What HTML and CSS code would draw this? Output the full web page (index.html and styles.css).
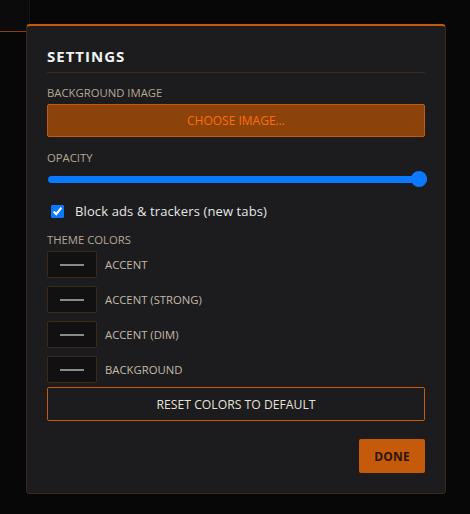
FILE: index.html
```html
<!DOCTYPE html>
<html lang="en">
<head>
<meta charset="utf-8">
<title>Settings</title>
<link rel="stylesheet" href="styles.css">
</head>
<body>
<div class="app">
  <div class="tabbar">
    <div class="tab"></div>
  </div>
</div>

<div class="modal">
  <h2 class="modal-title">SETTINGS</h2>

  <div class="field-label">BACKGROUND IMAGE</div>
  <button class="btn-choose">CHOOSE IMAGE...</button>

  <div class="field-label opacity-label">OPACITY</div>
  <input class="slider" type="range" min="0" max="100" value="100">

  <label class="check-row">
    <input type="checkbox" class="check" checked>
    <span>Block ads &amp; trackers (new tabs)</span>
  </label>

  <div class="field-label theme-label">THEME COLORS</div>
  <div class="swatches">
    <div class="swatch-row"><div class="swatch"><span class="swatch-line"></span></div><span class="swatch-name">ACCENT</span></div>
    <div class="swatch-row"><div class="swatch"><span class="swatch-line"></span></div><span class="swatch-name">ACCENT (STRONG)</span></div>
    <div class="swatch-row"><div class="swatch"><span class="swatch-line"></span></div><span class="swatch-name">ACCENT (DIM)</span></div>
    <div class="swatch-row"><div class="swatch"><span class="swatch-line"></span></div><span class="swatch-name">BACKGROUND</span></div>
  </div>

  <button class="btn-reset">RESET COLORS TO DEFAULT</button>

  <div class="actions">
    <button class="btn-done">DONE</button>
  </div>
</div>
</body>
</html>
```

FILE: styles.css
```css
* { box-sizing: border-box; }

html, body {
  margin: 0;
  padding: 0;
  background: #070707;
  width: 470px;
  height: 514px;
  overflow: hidden;
  font-family: "Open Sans", "Noto Sans", sans-serif;
}

.app {
  width: 100%;
  height: 100%;
}

.tabbar {
  display: flex;
  height: 32px;
}

.tab {
  width: 30px;
  height: 32px;
  background: #0b0b0b;
  border-bottom: 1px solid #8a3f0c;
  border-right: 1px solid #161616;
}

.modal {
  position: absolute;
  left: 26px;
  top: 24px;
  width: 420px;
  background: #1c1c1e;
  border: 1px solid #3a2a1c;
  border-top: 2px solid #c55a0b;
  border-radius: 4px;
  padding: 20px;
  display: flex;
  flex-direction: column;
}

.modal-title {
  margin: 0;
  font-size: 15px;
  line-height: 20px;
  font-weight: 700;
  letter-spacing: 1px;
  color: #f2f2f2;
  padding-bottom: 6px;
  border-bottom: 1px solid #3b2a18;
}

.field-label {
  margin-top: 12px;
  font-size: 11.3px;
  line-height: 16px;
  color: #b3a796;
}

.btn-choose {
  margin-top: 3px;
  height: 33px;
  width: 100%;
  background: #8c420b;
  border: 1px solid #c55a0b;
  border-radius: 2px;
  color: #ff6d0a;
  font-family: inherit;
  font-size: 12px;
  padding: 0;
}

.opacity-label {
  margin-top: 13px;
}

.slider {
  -webkit-appearance: none;
  appearance: none;
  margin: 5px 0 0 1px;
  width: calc(100% + 1px);
  height: 16px;
  background: transparent;
}

.slider::-webkit-slider-runnable-track {
  height: 7px;
  border-radius: 4px;
  background: #0a78ff;
}

.slider::-webkit-slider-thumb {
  -webkit-appearance: none;
  appearance: none;
  width: 16px;
  height: 16px;
  margin-top: -4.5px;
  border-radius: 50%;
  background: #0a78ff;
  border: none;
}

.check-row {
  margin-top: 14px;
  height: 20px;
  display: flex;
  align-items: center;
  gap: 11px;
  color: #e6e6e6;
  font-size: 13px;
  letter-spacing: 0.12px;
  padding-left: 4px;
}

.check {
  margin: 0;
  width: 13px;
  height: 13px;
  accent-color: #0a78ff;
}

.theme-label {
  margin-top: 11px;
}

.swatches {
  margin-top: 3px;
  display: flex;
  flex-direction: column;
  gap: 8px;
}

.swatch-row {
  display: flex;
  align-items: center;
  gap: 8px;
}

.swatch {
  width: 50px;
  height: 27px;
  background: #111112;
  border: 1px solid #3a2a1a;
  border-radius: 2px;
  display: flex;
  align-items: center;
  justify-content: center;
}

.swatch-line {
  width: 24px;
  height: 2px;
  background: #8a8a8a;
}

.swatch-name {
  font-size: 11.3px;
  color: #c3b9aa;
}

.btn-reset {
  margin-top: 4px;
  height: 34px;
  width: 100%;
  background: transparent;
  border: 1px solid #c55a0b;
  border-radius: 2px;
  color: #e8e2d6;
  font-family: inherit;
  font-size: 12.2px;
  padding: 0;
}

.actions {
  margin-top: 18px;
  display: flex;
  justify-content: flex-end;
}

.btn-done {
  height: 34px;
  width: 66px;
  background: #c55a0b;
  border: none;
  border-radius: 2px;
  color: #2a1608;
  font-family: inherit;
  font-weight: 700;
  font-size: 12px;
  letter-spacing: 0.2px;
  padding: 0;
}
```
